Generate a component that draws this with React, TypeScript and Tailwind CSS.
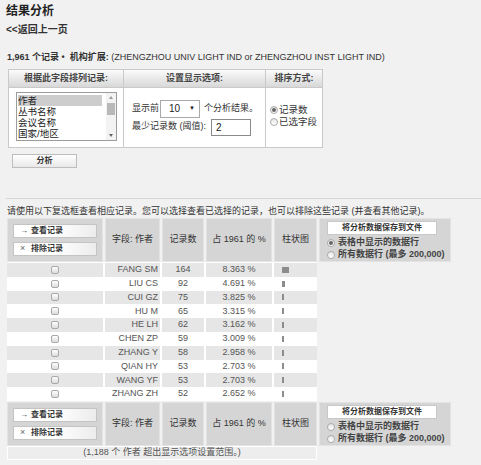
import React from "react";

const rows: [string, number, string, number][] = [
  ["FANG SM", 164, "8.363 %", 7],
  ["LIU CS", 92, "4.691 %", 3],
  ["CUI GZ", 75, "3.825 %", 2],
  ["HU M", 65, "3.315 %", 2],
  ["HE LH", 62, "3.162 %", 2],
  ["CHEN ZP", 59, "3.009 %", 2],
  ["ZHANG Y", 58, "2.958 %", 1.5],
  ["QIAN HY", 53, "2.703 %", 1.5],
  ["WANG YF", 53, "2.703 %", 1.5],
  ["ZHANG ZH", 52, "2.652 %", 1.5],
];

function Radio({ checked }: { checked?: boolean }) {
  return (
    <span className="inline-flex w-[8px] h-[8px] rounded-full border border-[#ababab] bg-linear-to-b from-[#e6e6e6] to-[#ffffff] items-center justify-center shrink-0">
      {checked && <span className="w-[4px] h-[4px] rounded-full bg-[#666]" />}
    </span>
  );
}

function Checkbox() {
  return (
    <span className="inline-block w-[8px] h-[8px] rounded-[2px] border border-[#a9a9a9] bg-linear-to-b from-[#ffffff] to-[#dcdcdc]" />
  );
}

function HeaderRow({ firstRadio }: { firstRadio: boolean }) {
  const cell =
    "bg-[#d5d5d5] border border-[#e3e3e3] flex items-center justify-center text-[9px] text-[#333]";
  return (
    <div className="flex gap-[2px] h-[44px]">
      <div className={`${cell} w-[96px] flex-col gap-[4px]`}>
        <div className="w-[84px] h-[14px] border border-[#c4c4c4] bg-linear-to-r from-[#ffffff] via-[#ffffff] to-[#ececec] flex items-center pl-[6px] text-[8px] font-bold text-[#333]">
          <span className="w-[11px] text-[8px]">→</span>
          <span>查看记录</span>
        </div>
        <div className="w-[84px] h-[14px] border border-[#c4c4c4] bg-linear-to-r from-[#ffffff] via-[#ffffff] to-[#ececec] flex items-center pl-[6px] text-[8px] font-bold text-[#333]">
          <span className="w-[11px] text-[9px] font-normal text-[#666]">×</span>
          <span>排除记录</span>
        </div>
      </div>
      <div className={`${cell} w-[55px]`}>字段: 作者</div>
      <div className={`${cell} w-[42px]`}>记录数</div>
      <div className={`${cell} w-[66px]`}>占 1961 的 %</div>
      <div className={`${cell} w-[43px]`}>柱状图</div>
      <div className="bg-[#d5d5d5] border border-[#e3e3e3] w-[132px] flex flex-col pl-[7px] pt-[2px]">
        <div className="w-[110px] h-[14px] bg-white border border-[#c8c8c8] flex items-center justify-center text-[8px] font-bold text-[#333]">
          将分析数据保存到文件
        </div>
        <div className="mt-[2px] flex items-center gap-[3px] h-[12px] text-[9px] font-bold text-[#444]">
          <Radio checked={firstRadio} />
          <span>表格中显示的数据行</span>
        </div>
        <div className="flex items-center gap-[3px] h-[12px] text-[9px] font-bold text-[#444]">
          <Radio />
          <span>所有数据行 (最多 200,000)</span>
        </div>
      </div>
    </div>
  );
}

export default function App() {
  return (
    <div className="w-[481px] h-[465px] overflow-hidden bg-[#f1f1f1] text-[#333] font-['Liberation_Sans','Noto_Sans_CJK_SC',sans-serif]">
      <div className="pt-[3px] pl-[6px]">
        <div className="text-[12px] font-bold leading-[16px] text-[#222]">结果分析</div>
        <div className="mt-[5px] text-[10px] font-bold leading-[12px] text-[#333]">&lt;&lt;返回上一页</div>
        <div className="mt-[15px] ml-[1px] text-[9px] leading-[12px] text-[#333]">
          <span className="font-bold">1,961 个记录 • &nbsp;机构扩展:</span>{" "}
          <span>(ZHENGZHOU UNIV LIGHT IND or ZHENGZHOU INST LIGHT IND)</span>
        </div>

        {/* options table */}
        <div className="mt-[6px] ml-[2px] w-[315px] border border-[#c9c9c9] bg-white">
          <div className="flex h-[18px] bg-linear-to-b from-[#fbfbfb] to-[#d8d8d8] border-b border-[#c9c9c9] text-[9px] font-bold text-[#444]">
            <div className="w-[115px] border-r border-[#c9c9c9] flex items-center justify-center">根据此字段排列记录:</div>
            <div className="w-[142px] border-r border-[#c9c9c9] flex items-center justify-center">设置显示选项:</div>
            <div className="flex-1 flex items-center justify-center">排序方式:</div>
          </div>
          <div className="flex h-[59px]">
            <div className="w-[115px] border-r border-[#c9c9c9] pl-[7px] pt-[4px]">
              <div className="w-[101px] h-[49px] border border-[#9c9c9c] bg-white flex overflow-hidden">
                <div className="flex-1 pl-[1px] pt-[2px] text-[9.5px] leading-[11px] text-[#222]">
                  <div className="w-[84px] bg-[#cdcdcd]">作者</div>
                  <div>丛书名称</div>
                  <div>会议名称</div>
                  <div>国家/地区</div>
                  <div>文献类型</div>
                </div>
                <div className="w-[10px] bg-[#f3f3f3] flex flex-col items-center pt-[3px] pb-[3px]">
                  <span className="w-0 h-0 border-l-[2.5px] border-r-[2.5px] border-b-[3px] border-l-transparent border-r-transparent border-b-[#999]" />
                  <span className="mt-[4px] w-[8px] h-[12px] bg-[#b9b9b9]" />
                  <span className="flex-1" />
                  <span className="w-0 h-0 border-l-[2.5px] border-r-[2.5px] border-t-[3px] border-l-transparent border-r-transparent border-t-[#666]" />
                </div>
              </div>
            </div>
            <div className="w-[142px] border-r border-[#c9c9c9] flex flex-col justify-center pl-[8px] text-[9px] text-[#333]">
              <div className="flex items-center">
                <span>显示前</span>
                <div className="ml-[1px] w-[40px] h-[18px] border border-[#a9a9a9] bg-white flex items-center pl-[8px] text-[10px] text-[#222]">
                  10
                  <span className="ml-auto mr-[4px] text-[6px]">▼</span>
                </div>
                <span className="ml-[4px]">个分析结果。</span>
              </div>
              <div className="flex items-center mt-[1px]">
                <span>最少记录数 (阈值):</span>
                <div className="ml-[5px] w-[40px] h-[17px] border border-[#8a8a8a] bg-white flex items-center pl-[4px] text-[10px] text-[#222]">
                  2
                </div>
              </div>
            </div>
            <div className="flex-1 flex flex-col justify-center pl-[4px] pb-[3px] text-[9.5px] leading-[12px] text-[#333]">
              <div className="flex items-center gap-[1px]">
                <Radio checked />
                <span>记录数</span>
              </div>
              <div className="flex items-center gap-[1px]">
                <Radio />
                <span>已选字段</span>
              </div>
            </div>
          </div>
        </div>

        <div className="mt-[6px] ml-[6px] w-[65px] h-[14px] border border-[#bdbdbd] bg-linear-to-b from-[#ffffff] to-[#e9e9e9] flex items-center justify-center text-[8px] font-bold text-[#333]">
          分析
        </div>
      </div>

      <div className="mt-[30px] ml-[6px] border-t border-[#d6d6d6]" />

      <div className="pl-[7px] mt-[6px] text-[9px] leading-[12px] text-[#333]">
        请使用以下复选框查看相应记录。您可以选择查看已选择的记录，也可以排除这些记录 (并查看其他记录)。
      </div>

      <div className="ml-[7px] mt-[1px] flex flex-col">
        <HeaderRow firstRadio />
        <div className="w-[310px] bg-white pt-[1px] flex flex-col">
          {rows.map(([name, count, pct, bw], i) => {
            const c = i % 2 === 0 ? "bg-[#e6e6e6]" : "bg-white";
            return (
              <div key={i} className="flex gap-[2px] h-[13.8px] text-[9px] text-[#555]">
                <div className={`${c} w-[96px] flex items-center justify-center`}>
                  <Checkbox />
                </div>
                <div className={`${c} w-[55px] flex items-center justify-end pr-[2px]`}>{name}</div>
                <div className={`${c} w-[42px] flex items-center justify-center`}>{count}</div>
                <div className={`${c} w-[66px] flex items-center justify-center`}>{pct}</div>
                <div className={`${c} w-[43px] flex items-center pl-[8px]`}>
                  <span className="h-[6px] bg-[#8c8c8c]" style={{ width: `${bw}px` }} />
                </div>
              </div>
            );
          })}
        </div>
        <div className="mt-[1px]">
          <HeaderRow firstRadio={false} />
        </div>
        <div className="w-[310px] h-[14px] bg-[#ededed] border border-white flex items-center justify-center text-[9px] text-[#555]">
          (1,188 个 作者 超出显示选项设置范围。)
        </div>
      </div>
    </div>
  );
}
